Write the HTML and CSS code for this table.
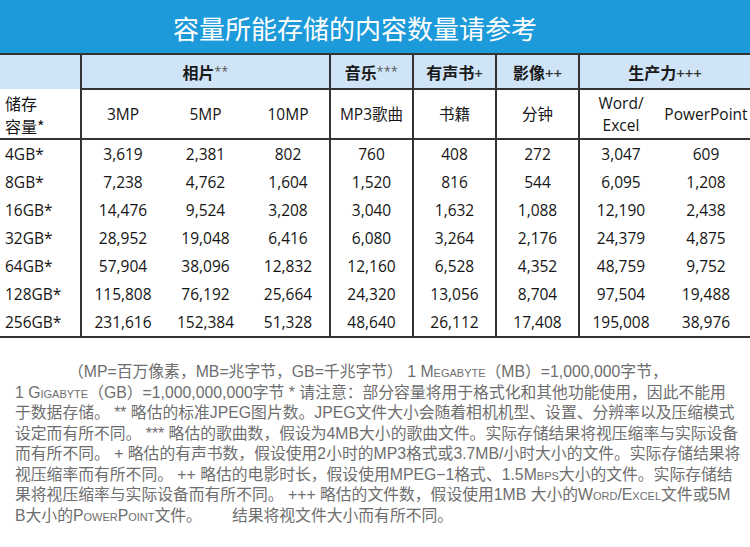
FILE: index.html
```html
<!DOCTYPE html>
<html lang="zh">
<head>
<meta charset="utf-8">
<link rel="stylesheet" href="styles.css">
</head>
<body>
<div class="page">
  <header class="banner"><h1 class="title">容量所能存储的内容数量请参考</h1></header>
  <table class="cap">
    <colgroup>
      <col class="c-size"><col class="c-n"><col class="c-n"><col class="c-n"><col class="c-n"><col class="c-n"><col class="c-n"><col class="c-n"><col class="c-last">
    </colgroup>
    <thead>
      <tr class="cat">
        <th class="corner"></th>
        <th colspan="3">相片<span class="suf">**</span></th>
        <th>音乐<span class="suf">***</span></th>
        <th>有声书<span class="plus">+</span></th>
        <th>影像<span class="plus">++</span></th>
        <th colspan="2">生产力<span class="plus">+++</span></th>
      </tr>
      <tr class="sub">
        <th class="size">储存<br>容量*</th>
        <th class="g">3MP</th>
        <th>5MP</th>
        <th>10MP</th>
        <th class="g">MP3歌曲</th>
        <th class="g">书籍</th>
        <th class="g">分钟</th>
        <th class="g word">Word/<br>Excel</th>
        <th>PowerPoint</th>
      </tr>
    </thead>
    <tbody>
      <tr><td class="size">4GB*</td><td class="g">3,619</td><td>2,381</td><td>802</td><td class="g">760</td><td class="g">408</td><td class="g">272</td><td class="g">3,047</td><td>609</td></tr>
      <tr><td class="size">8GB*</td><td class="g">7,238</td><td>4,762</td><td>1,604</td><td class="g">1,520</td><td class="g">816</td><td class="g">544</td><td class="g">6,095</td><td>1,208</td></tr>
      <tr><td class="size">16GB*</td><td class="g">14,476</td><td>9,524</td><td>3,208</td><td class="g">3,040</td><td class="g">1,632</td><td class="g">1,088</td><td class="g">12,190</td><td>2,438</td></tr>
      <tr><td class="size">32GB*</td><td class="g">28,952</td><td>19,048</td><td>6,416</td><td class="g">6,080</td><td class="g">3,264</td><td class="g">2,176</td><td class="g">24,379</td><td>4,875</td></tr>
      <tr><td class="size">64GB*</td><td class="g">57,904</td><td>38,096</td><td>12,832</td><td class="g">12,160</td><td class="g">6,528</td><td class="g">4,352</td><td class="g">48,759</td><td>9,752</td></tr>
      <tr><td class="size">128GB*</td><td class="g">115,808</td><td>76,192</td><td>25,664</td><td class="g">24,320</td><td class="g">13,056</td><td class="g">8,704</td><td class="g">97,504</td><td>19,488</td></tr>
      <tr><td class="size">256GB*</td><td class="g">231,616</td><td>152,384</td><td>51,328</td><td class="g">48,640</td><td class="g">26,112</td><td class="g">17,408</td><td class="g">195,008</td><td>38,976</td></tr>
    </tbody>
  </table>
  <p class="notes">
    <span class="line first">（MP=百万像素，MB=兆字节，GB=千兆字节） 1 <span class="sc">Megabyte</span>（MB）=1,000,000字节，</span>
    <span class="line">1 <span class="sc">Gigabyte</span>（GB）=1,000,000,000字节 * 请注意：部分容量将用于格式化和其他功能使用，因此不能用</span>
    <span class="line">于数据存储。 ** 略估的标准JPEG图片数。JPEG文件大小会随着相机机型、设置、分辨率以及压缩模式</span>
    <span class="line">设定而有所不同。 *** 略估的歌曲数，假设为4MB大小的歌曲文件。实际存储结果将视压缩率与实际设备</span>
    <span class="line">而有所不同。 + 略估的有声书数，假设使用2小时的MP3格式或3.7MB/小时大小的文件。实际存储结果将</span>
    <span class="line">视压缩率而有所不同。 ++ 略估的电影时长，假设使用MPEG−1格式、1.5M<span class="sc">bps</span>大小的文件。实际存储结</span>
    <span class="line">果将视压缩率与实际设备而有所不同。 +++ 略估的文件数，假设使用1MB 大小的<span class="sc">Word/Excel</span>文件或5M</span>
    <span class="line">B大小的<span class="sc">PowerPoint</span>文件。<span class="gap">结果将视文件大小而有所不同。</span></span>
  </p>
</div>
</body>
</html>
```

FILE: styles.css
```css
html, body {
  margin: 0;
  padding: 0;
  background: #ffffff;
}

.page {
  width: 750px;
  overflow: hidden;
}

.banner {
  height: 53px;
  background: #1d9ad9;
  display: flex;
  align-items: center;
  justify-content: center;
  padding-right: 40px;
  box-sizing: border-box;
}

.title {
  margin: 0;
  color: #ffffff;
  font-family: "Noto Sans CJK SC", sans-serif;
  font-weight: 400;
  font-size: 26px;
  line-height: 1;
  padding-top: 2px;
}

.cap {
  width: 750px;
  table-layout: fixed;
  border-collapse: collapse;
  font-family: "Open Sans", "Noto Sans CJK SC", sans-serif;
  font-size: 15.5px;
  color: #151515;
}

.c-size { width: 81px; }
.c-n { width: 83px; }
.c-last { width: 88px; }

.cap th, .cap td {
  padding: 0;
  text-align: center;
  vertical-align: middle;
}

.cat th {
  height: 33px;
  background: #cfe4f7;
  border-top: 2px solid #333;
  border-bottom: 2px solid #333;
  border-left: 2px solid #333;
  font-family: "Noto Sans CJK SC", sans-serif;
  font-size: 16px;
  font-weight: 700;
  color: #1a1a1a;
}

.cat th.corner {
  border-left: none;
  border-bottom: none;
}

.suf {
  font-family: "Open Sans", sans-serif;
  font-weight: 400;
  font-size: 12px;
  color: #555;
  vertical-align: 3px;
  letter-spacing: 0.5px;
}

.plus {
  font-family: "Open Sans", sans-serif;
  font-weight: 600;
  font-size: 15px;
  color: #333;
}

.sub th {
  height: 47px;
  font-weight: 400;
  font-family: "Open Sans", "Noto Sans CJK SC", sans-serif;
  font-size: 15.5px;
  border-bottom: 2px solid #333;
  line-height: 21px;
}

.sub th.size {
  text-align: left;
  padding-left: 5px;
  font-family: "Noto Sans CJK SC", sans-serif;
  font-size: 16px;
  line-height: 23px;
  padding-top: 2px;
}

.sub th.word {
  line-height: 22px;
}

.cap .g {
  border-left: 2px solid #333;
}

tbody td {
  height: 28px;
  padding-bottom: 3px;
}

tbody td.size {
  text-align: left;
  padding-left: 5px;
}

tbody tr:last-child td {
  border-bottom: 2px solid #333;
}

.notes {
  margin: 24px 0 0 0;
  padding: 0 0 0 15px;
  font-family: "Liberation Sans", "Noto Sans CJK SC", sans-serif;
  font-size: 15.8px;
  line-height: 20.5px;
  color: #6e6e6e;
}

.line {
  display: block;
  white-space: nowrap;
}

.line.first {
  padding-left: 53px;
}

.sc {
  font-variant: small-caps;
}

.gap {
  margin-left: 30px;
}
```
